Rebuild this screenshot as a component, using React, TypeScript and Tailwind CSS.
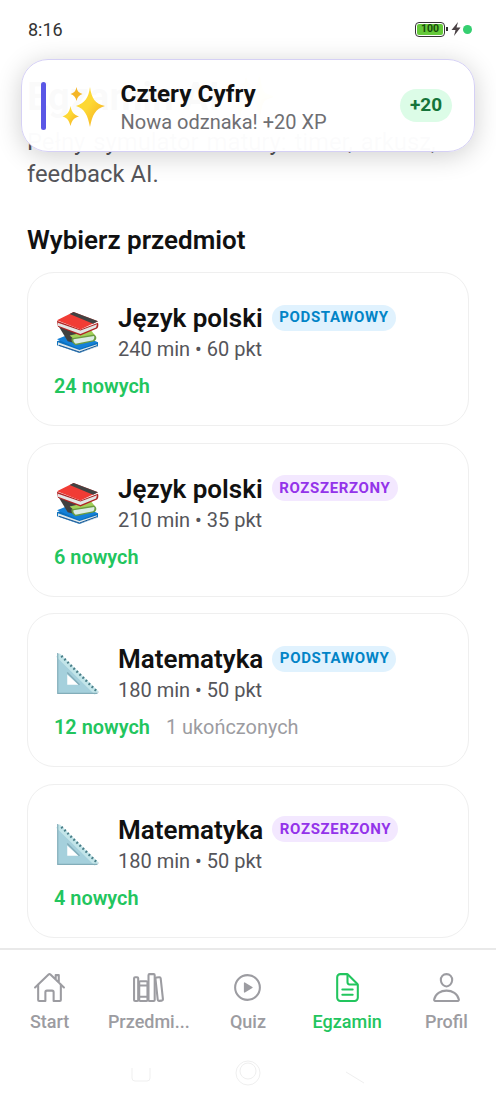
import React from 'react';
import {
  IoHomeOutline,
  IoLibraryOutline,
  IoPlayCircleOutline,
  IoDocumentTextOutline,
  IoPersonOutline,
} from 'react-icons/io5';
import { clsx } from 'clsx';

type Level = 'PODSTAWOWY' | 'ROZSZERZONY';

interface Exam {
  name: string;
  icon: React.ReactNode;
  level: Level;
  meta: string;
  fresh: string;
  done?: string;
}

function BooksIcon() {
  return (
    <svg viewBox="0 0 44 44" className="h-[43px] w-[43px]">
      <path d="M1 31 L20 24 L43 32 L43 36 L24 43 L1 35 Z" fill="#0b6fbd" />
      <path d="M2 32 L24 40 L42 34 L42 37 L24 42.500 L2 35 Z" fill="#dfe8ea" />
      <path d="M1 29 L13 24 L43 32 L24 39 Z" fill="#1480d8" />
      <path d="M3 35 L24 42 L42 35.500" fill="none" stroke="#0a4f91" strokeWidth="1" />
      <path d="M3 16 L26 23 L20 33 L12 31 Z" fill="#414141" />
      <path d="M14 25 L36 20 L40 25 L21 31 Z" fill="#a2cf58" />
      <path d="M16 28 L39 24 C42 26 42 29 39 31 L20 35 Q15 32 16 28 Z" fill="#6b9c41" />
      <path d="M18 29 L39 25.500 Q40 28 38 30 L20 33.500 Q17 31 18 29 Z" fill="#dcebe4" />
      <path d="M1 10 L25 19 L43 12 Q44 16 42 18 L25 25 L2 16 Z" fill="#af2424" />
      <path d="M2 12 L25 20 L42 13.500 L41 17 L25 23.500 L2 15 Z" fill="#e2e7e6" />
      <path d="M1 9.500 L18 1 L43 10.500 L25 19 Z" fill="#f13c35" />
      <path d="M14 3 L18 1 L43 10.500 L38 13 Z" fill="#424242" />
    </svg>
  );
}

function SetSquareIcon() {
  return (
    <svg viewBox="0 0 44 44" className="h-[43px] w-[43px]">
      <path d="M1.500 1 L43 42.500 H1.500 Z M11.500 23 V33.500 H23 Z" fill="#a5d0dc" fillRule="evenodd" />
      <path d="M2 3 L41.500 42" stroke="#c3e5e9" strokeWidth="5" />
      <path d="M5.500 4 L43 41.500" stroke="#477d87" strokeWidth="2.500" strokeDasharray="1.800 2.600" />
      <path d="M1.800 1 V42.300 H42" fill="none" stroke="#83adb9" strokeWidth="1.200" />
      <path d="M11.500 21 L24 33.500" stroke="#83adb9" strokeWidth="1.500" />
    </svg>
  );
}

function SparklesIcon() {
  return (
    <svg viewBox="0 0 44 44" className="h-11 w-11">
      <defs>
        <linearGradient id="spark" x1="0" x2="1" y1="0" y2="1">
          <stop offset="0.450" stopColor="#fdd835" />
          <stop offset="1" stopColor="#f4a51c" />
        </linearGradient>
      </defs>
      <path d="M28 2 C29.500 13 33 19 43 21 C33 24 30.500 30 28 42 C25.500 30 23 24 14 21 C23 18 26.500 13 28 2 Z" fill="url(#spark)" />
      <path d="M8.500 21 C9.500 27 12 30 17 31.500 C12 33 10 35 8.500 41 C7 35 5 33 0.500 31.500 C5 30 7.500 27 8.500 21 Z" fill="url(#spark)" />
      <path d="M14.500 2 C15 6 17 8 20.500 9 C17 10 15.500 12 14.500 16 C13.500 12 12 10 8.500 9 C12 8 13.800 6 14.500 2 Z" fill="#f4b526" />
    </svg>
  );
}

const exams: Exam[] = [
  { name: 'Język polski', icon: <BooksIcon />, level: 'PODSTAWOWY', meta: '240 min • 60 pkt', fresh: '24 nowych' },
  { name: 'Język polski', icon: <BooksIcon />, level: 'ROZSZERZONY', meta: '210 min • 35 pkt', fresh: '6 nowych' },
  { name: 'Matematyka', icon: <SetSquareIcon />, level: 'PODSTAWOWY', meta: '180 min • 50 pkt', fresh: '12 nowych', done: '1 ukończonych' },
  { name: 'Matematyka', icon: <SetSquareIcon />, level: 'ROZSZERZONY', meta: '180 min • 50 pkt', fresh: '4 nowych' },
];

const tabs = [
  { label: 'Start', icon: IoHomeOutline },
  { label: 'Przedmi...', icon: IoLibraryOutline },
  { label: 'Quiz', icon: IoPlayCircleOutline },
  { label: 'Egzamin', icon: IoDocumentTextOutline, active: true },
  { label: 'Profil', icon: IoPersonOutline },
];

function StatusBar() {
  return (
    <div className="flex h-[59px] items-center justify-between pl-7 pr-6">
      <span className="text-[18px] text-[#333]">8:16</span>
      <div className="flex items-center pb-px">
        <div className="flex h-[15px] w-[30px] rounded-[4px] border-[1.5px] border-[#333] p-px">
          <div className="flex flex-1 items-center justify-center rounded-[2px] bg-[#65c93a] pt-px text-[10.5px] font-bold leading-none text-[#174d0b]">
            100
          </div>
        </div>
        <div className="ml-px h-1 w-[2px] bg-[#333]" />
        <svg viewBox="0 0 10 14" className="ml-[3px] h-[14px] w-[10px]">
          <path d="M7 0 L0.500 8 H4.500 L3 14 L9.500 5.500 H5.500 Z" fill="#4a4144" />
        </svg>
        <div className="ml-[2px] h-[9px] w-[9px] rounded-full bg-[#35cf70]" />
      </div>
    </div>
  );
}

function Toast() {
  return (
    <div className="absolute left-[21px] top-[59px] flex h-[93px] w-[454px] items-center rounded-[27px] border border-[#d5d0f5] bg-white/98 pl-[19px] pr-[21px] shadow-[0_4px_26px_rgba(0,0,0,0.19)]">
      <div className="h-[48px] w-[5px] rounded-full bg-[#5a57e6]" />
      <div className="ml-[16px] pt-[2px]">
        <SparklesIcon />
      </div>
      <div className="ml-[14.5px] flex-1 pt-[3px]">
        <p className="text-[24.3px] font-bold leading-[30px] text-[#111]">Cztery Cyfry</p>
        <p className="text-[20px] leading-[27px] text-[#6f6f73]">Nowa odznaka! +20 XP</p>
      </div>
      <span className="mr-px flex h-[33px] w-[52px] items-center justify-center rounded-full bg-[#dcfce7] text-[19px] font-bold text-[#15743a]">
        +20
      </span>
    </div>
  );
}

function ExamCard({ exam }: { exam: Exam }) {
  return (
    <div className="h-[154px] rounded-[27px] border border-[#efefef] bg-white px-[26px] pt-[29px]">
      <div className="flex items-start gap-[19px]">
        <div className="pl-[2px] pt-[9px]">{exam.icon}</div>
        <div>
          <div className="flex items-center gap-[9px]">
            <h3 className="text-[26px] font-semibold leading-[32px] text-[#111]">{exam.name}</h3>
            <span
              className={clsx(
                'mb-px flex h-[26px] items-center rounded-full pl-[7.5px] pr-[7px] text-[15px] font-bold tracking-[0.65px]',
                exam.level === 'PODSTAWOWY' ? 'bg-[#e0f2fe] text-[#0284c7]' : 'bg-[#f3e8ff] text-[#9333ea]'
              )}
            >
              {exam.level}
            </span>
          </div>
          <p className="text-[20px] leading-[31px] text-[#55555a]">{exam.meta}</p>
        </div>
      </div>
      <div className="mt-[8px] flex gap-4 text-[19.9px] leading-[28px]">
        <span className="font-semibold text-[#22c55e]">{exam.fresh}</span>
        {exam.done && <span className="text-[#9c9ca1]">{exam.done}</span>}
      </div>
    </div>
  );
}

function TabBar() {
  return (
    <nav className="h-[155px] shrink-0 border-t-2 border-[#e9e9e9] bg-white">
      <div className="grid grid-cols-5 pt-[21px]">
        {tabs.map((tab) => (
          <div
            key={tab.label}
            className={clsx('flex flex-col items-center', tab.active ? 'text-[#22c55e]' : 'text-[#9c9ca1]')}
          >
            <tab.icon size={33} />
            <span className="mt-[5px] text-[18px] font-medium leading-[26px]">{tab.label}</span>
          </div>
        ))}
      </div>
      <svg viewBox="0 0 496 40" className="mt-[17px] h-10 w-full" fill="none" stroke="#efefef">
        <path d="M132 16 V26 Q132 29 135 29 H147 Q150 29 150 26 V16" />
        <circle cx="248" cy="21" r="12" />
        <circle cx="248" cy="19" r="8" />
        <path d="M346 20 L364 31" />
      </svg>
    </nav>
  );
}

export default function App() {
  return (
    <div className="relative flex h-[1103px] w-[496px] flex-col overflow-hidden bg-white font-['Roboto',sans-serif]">
      <StatusBar />
      <main className="min-h-0 flex-1 overflow-hidden px-[27px]">
        <h1 className="mt-[15px] text-[38px] font-bold leading-[46px] text-[#111]">Egzamin AI ✨</h1>
        <p className="mt-[7px] whitespace-nowrap text-[23.8px] leading-[31.5px] text-[#55555a]">
          <span className="[word-spacing:2px]">Pełny symulator matury: timer, arkusz,</span>
          <br />
          feedback AI.
        </p>
        <h2 className="mt-[34px] text-[26px] font-semibold leading-[32px] text-[#111]">Wybierz przedmiot</h2>
        <div className="mt-[16px] space-y-[16.5px]">
          {exams.map((exam) => (
            <ExamCard key={exam.name + exam.level} exam={exam} />
          ))}
        </div>
      </main>
      <TabBar />
      <Toast />
    </div>
  );
}
